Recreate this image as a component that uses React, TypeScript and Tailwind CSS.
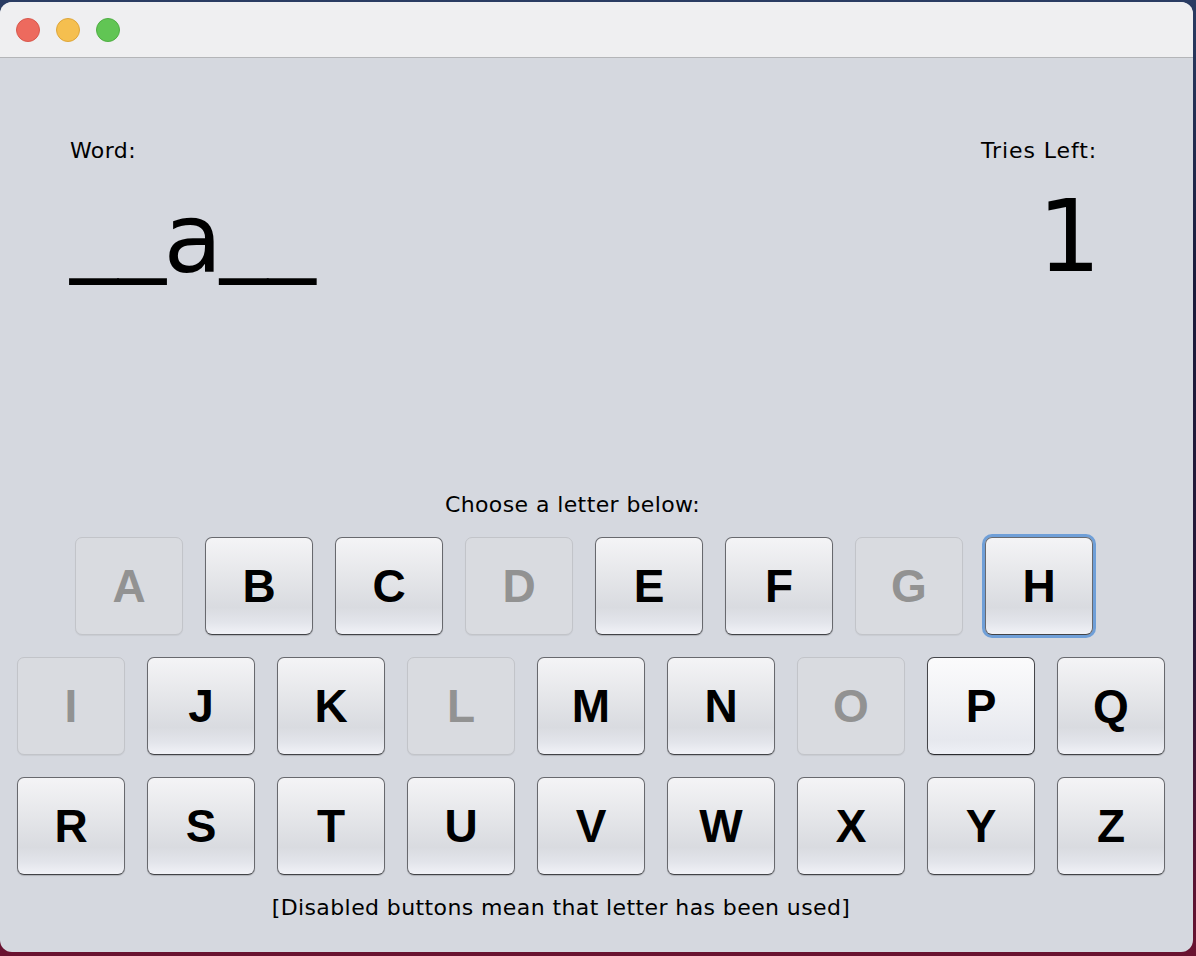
const rows: string[][] = [
  ["A", "B", "C", "D", "E", "F", "G", "H"],
  ["I", "J", "K", "L", "M", "N", "O", "P", "Q"],
  ["R", "S", "T", "U", "V", "W", "X", "Y", "Z"],
];

const used = new Set(["A", "D", "G", "I", "L", "O"]);

function LetterKey({ letter }: { letter: string }) {
  const disabled = used.has(letter);
  const focused = letter === "H";
  const hover = letter === "P";

  let cls =
    "w-[108px] h-[98px] shrink-0 rounded-[7px] flex items-center justify-center text-[46px] font-bold font-['Liberation_Sans',Arial,sans-serif] leading-none";
  if (disabled) {
    cls += " border border-[#c2c4c9] bg-[#d9dbe0] text-[#929292] shadow-[0_1px_1px_rgba(0,0,0,0.06)]";
  } else if (hover) {
    cls +=
      " border border-[#45464a] border-b-[#2a2b2f] text-black bg-[linear-gradient(to_bottom,#fbfbfc_0%,#f1f2f5_45%,#e6e8ee_85%,#eef0f6_100%)] shadow-[0_1px_1px_rgba(0,0,0,0.18)]";
  } else {
    cls +=
      " border border-[#68696e] border-b-[#424347] text-black bg-[linear-gradient(to_bottom,#f4f4f6_0%,#e7e8eb_35%,#d9dbe0_72%,#e3e5eb_88%,#f1f2f7_100%)] shadow-[0_1px_1px_rgba(0,0,0,0.18)]";
  }
  if (focused) {
    cls += " ring-[3px] ring-[#6f9fd8]";
  }

  return (
    <button type="button" disabled={disabled} className={cls}>
      {letter}
    </button>
  );
}

export default function App() {
  return (
    <div className="h-[956px] w-[1196px] overflow-hidden bg-[linear-gradient(to_bottom,#2a3c63_0%,#1a1a3a_30%,#2a1838_70%,#6a1230_100%)]">
      <div className="mt-[2px] w-[1193px] h-[950px] rounded-[12px] overflow-hidden flex flex-col bg-[#d5d8df] font-['DejaVu_Sans',sans-serif] text-black">
        {/* Title bar */}
        <div className="h-[56px] shrink-0 bg-[#efeff1] border-b border-[#b4b5b8] flex items-center gap-[16px] pl-[16px]">
          <span className="size-[24px] rounded-full bg-[#ed6a5e] border border-[#d8584d]" />
          <span className="size-[24px] rounded-full bg-[#f5bf4f] border border-[#dea63a]" />
          <span className="size-[24px] rounded-full bg-[#61c554] border border-[#4fae43]" />
        </div>

        {/* Word / tries */}
        <div className="flex justify-between pl-[70px] pr-[96px] pt-[80px] h-[400px] shrink-0">
          <div className="flex flex-col">
            <span className="text-[22px] leading-[26px] tracking-[0.4px]">Word:</span>
            <span className="mt-[17px] text-[96px] leading-none">
              <span className="align-[10px]">__</span>
              <span className="-mx-[2.5px]">a</span>
              <span className="align-[10px]">__</span>
            </span>
          </div>
          <div className="flex flex-col items-end">
            <span className="text-[22px] leading-[26px] tracking-[0.9px]">Tries Left:</span>
            <span className="mt-[23px] -mr-[4px] text-[100px] leading-none">1</span>
          </div>
        </div>

        {/* Keyboard */}
        <div className="w-[1145px] text-center text-[22px] leading-[26px] tracking-[0.4px] mt-[34px]">
          Choose a letter below:
        </div>
        <div className="flex flex-col gap-[22px] mt-[19px]">
          {rows.map((row, i) => (
            <div
              key={i}
              className={i === 0 ? "flex gap-[22px] pl-[75px]" : "flex gap-[22px] pl-[17px]"}
            >
              {row.map((l) => (
                <LetterKey key={l} letter={l} />
              ))}
            </div>
          ))}
        </div>
        <div className="w-[1122px] text-center text-[22px] leading-[26px] tracking-[0.4px] mt-[20px]">
          [Disabled buttons mean that letter has been used]
        </div>
      </div>
    </div>
  );
}
